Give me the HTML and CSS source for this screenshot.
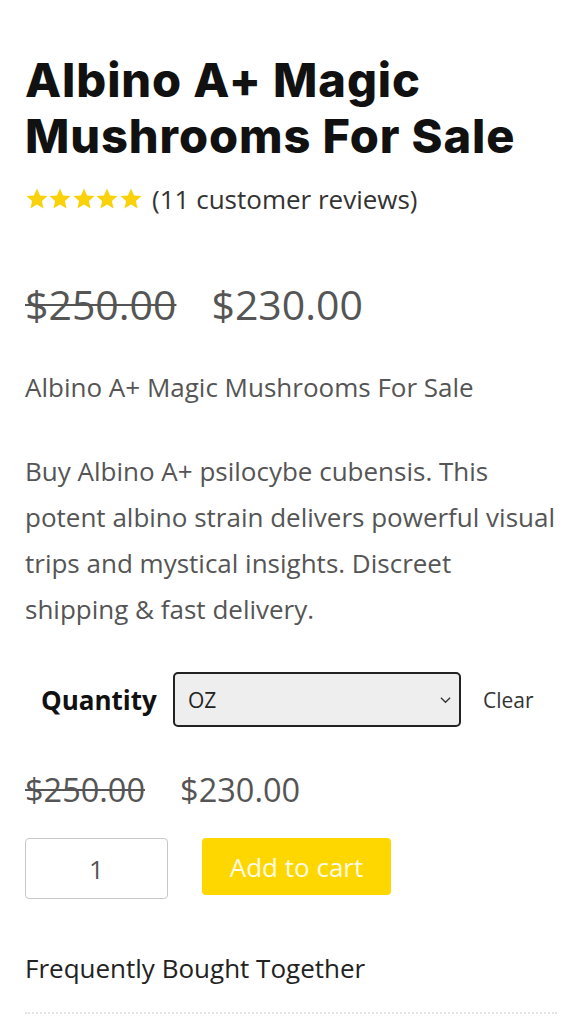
FILE: index.html
```html
<!DOCTYPE html>
<html>
<head>
<meta charset="utf-8">
<link rel="stylesheet" href="styles.css">
</head>
<body>
<main class="product">
  <h1 class="title">Albino A+ Magic Mushrooms For Sale</h1>
  <div class="rating">
    <span class="stars">
      <svg viewBox="0 0 24 24" class="star"><path d="M12 1.5l3.1 6.9 7.4.7-5.6 5 1.7 7.4L12 17.6l-6.6 3.9 1.7-7.4-5.6-5 7.4-.7z"/></svg>
      <svg viewBox="0 0 24 24" class="star"><path d="M12 1.5l3.1 6.9 7.4.7-5.6 5 1.7 7.4L12 17.6l-6.6 3.9 1.7-7.4-5.6-5 7.4-.7z"/></svg>
      <svg viewBox="0 0 24 24" class="star"><path d="M12 1.5l3.1 6.9 7.4.7-5.6 5 1.7 7.4L12 17.6l-6.6 3.9 1.7-7.4-5.6-5 7.4-.7z"/></svg>
      <svg viewBox="0 0 24 24" class="star"><path d="M12 1.5l3.1 6.9 7.4.7-5.6 5 1.7 7.4L12 17.6l-6.6 3.9 1.7-7.4-5.6-5 7.4-.7z"/></svg>
      <svg viewBox="0 0 24 24" class="star"><path d="M12 1.5l3.1 6.9 7.4.7-5.6 5 1.7 7.4L12 17.6l-6.6 3.9 1.7-7.4-5.6-5 7.4-.7z"/></svg>
    </span>
    <span class="reviews">(11 customer reviews)</span>
  </div>
  <div class="price price-main">
    <del>$250.00</del>
    <ins>$230.00</ins>
  </div>
  <p class="short">Albino A+ Magic Mushrooms For Sale</p>
  <p class="desc">Buy Albino A+ psilocybe cubensis. This potent albino strain delivers powerful visual trips and mystical insights. Discreet shipping &amp; fast delivery.</p>
  <div class="variation">
    <label class="var-label">Quantity</label>
    <div class="select">
      <span>OZ</span>
      <svg class="chev" viewBox="0 0 12 8"><path d="M1 1.5l5 5 5-5" fill="none" stroke="#333" stroke-width="1.4"/></svg>
    </div>
    <a class="clear">Clear</a>
  </div>
  <div class="price price-var">
    <del>$250.00</del>
    <ins>$230.00</ins>
  </div>
  <div class="cart">
    <div class="qty">1</div>
    <button class="add">Add to cart</button>
  </div>
  <h2 class="fbt">Frequently Bought Together</h2>
  <div class="divider"></div>
</main>
</body>
</html>
```
FILE: styles.css
```css
html, body {
  margin: 0;
  padding: 0;
  background: #fff;
}
.product {
  padding: 52px 25px 0 25px;
  font-family: "Open Sans", "Liberation Sans", sans-serif;
  color: #555;
}
.title {
  font-family: Inter, "Liberation Sans", sans-serif;
  font-weight: 800;
  font-size: 47px;
  line-height: 56px;
  letter-spacing: 0.9px;
  color: #111;
  margin: 0;
}
.rating {
  display: flex;
  align-items: center;
  gap: 10px;
  margin-top: 17px;
}
.stars {
  display: flex;
}
.star {
  width: 24px;
  height: 24px;
  fill: #f9d20c;
  margin-right: -0.6px;
}
.reviews {
  font-size: 26px;
  color: #333;
}
.price {
  display: flex;
  align-items: baseline;
}
.price del {
  text-decoration-thickness: 2px;
}
.price ins {
  text-decoration: none;
}
.price-main {
  margin-top: 59px;
  font-size: 41px;
  gap: 35px;
}
.short {
  font-size: 26px;
  margin: 37px 0 0;
}
.desc {
  font-size: 26px;
  line-height: 46px;
  margin: 43px 0 0;
}
.variation {
  display: flex;
  align-items: center;
  margin-top: 40px;
}
.var-label {
  font-weight: 700;
  font-size: 26px;
  color: #111;
  margin-left: 16px;
  width: 132px;
}
.select {
  box-sizing: border-box;
  width: 288px;
  height: 55px;
  border: 2px solid #222;
  border-radius: 5px;
  background: #eee;
  display: flex;
  align-items: center;
  justify-content: space-between;
  padding: 0 8px 0 13px;
  font-size: 21px;
  color: #222;
}
.chev {
  width: 11px;
  height: 8px;
}
.clear {
  margin-left: 22px;
  font-size: 21px;
  color: #333;
}
.price-var {
  margin-top: 40px;
  font-size: 32.5px;
  gap: 35px;
}
.cart {
  display: flex;
  align-items: flex-start;
  gap: 34px;
  margin-top: 26px;
}
.qty {
  box-sizing: border-box;
  width: 143px;
  height: 61px;
  border: 1px solid #c8c8c8;
  border-radius: 4px;
  display: flex;
  align-items: center;
  justify-content: center;
  font-size: 26px;
  color: #555;
}
.add {
  box-sizing: border-box;
  height: 57px;
  width: 189px;
  border: none;
  border-radius: 4px;
  background: #fed700;
  color: #fffbe6;
  font-family: "Open Sans", "Liberation Sans", sans-serif;
  font-size: 26px;
  font-weight: 500;
}
.fbt {
  font-weight: 400;
  font-size: 26px;
  color: #222;
  margin: 51px 0 0;
}
.divider {
  margin-top: 26px;
  border-top: 2px dotted #e4e4e4;
  width: 532px;
}
```
